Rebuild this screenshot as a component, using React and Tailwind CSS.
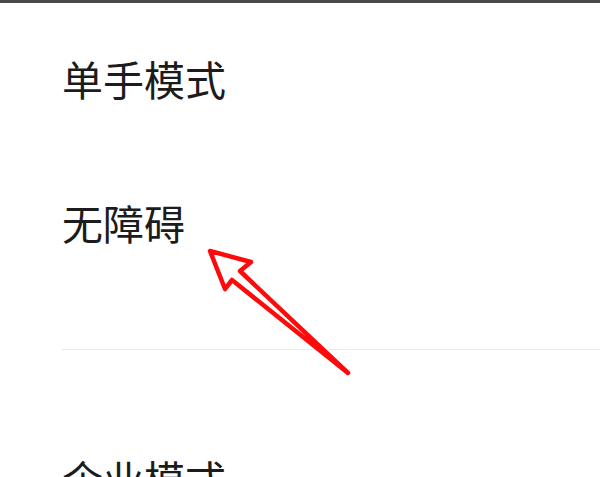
import React from "react";

export default function App() {
  return (
    <div className="relative w-[600px] h-[477px] overflow-hidden bg-white">
      <div className="h-[3px] bg-[#4a4a4a]" />
      <div className="pl-[62px] font-['Noto_Sans_CJK_SC',sans-serif] text-[41px] leading-[41px] text-[#1c1c1c]">
        <div className="mt-[55px]">单手模式</div>
        <div className="mt-[103px]">无障碍</div>
      </div>
      <div className="ml-[62px] mt-[106px] h-px bg-[#ebebeb]" />
      <div className="pl-[62px] mt-[108px] font-['Noto_Sans_CJK_SC',sans-serif] text-[41px] leading-[41px] text-[#1c1c1c]">
        企业模式
      </div>
      <svg
        className="absolute left-0 top-0 pointer-events-none"
        width="600"
        height="477"
        viewBox="0 0 600 477"
      >
        <polygon
          points="210,251 251,262 240,271 348,373 232,280 225,289"
          fill="none"
          stroke="#ff0a0a"
          strokeWidth="4.5"
          strokeLinejoin="round"
        />
      </svg>
    </div>
  );
}
